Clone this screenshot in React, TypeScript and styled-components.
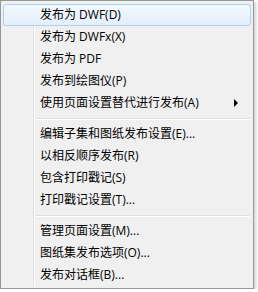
import React from 'react';
import styled, { createGlobalStyle } from 'styled-components';

const GlobalStyle = createGlobalStyle`
  html, body {
    margin: 0;
    padding: 0;
    background: #ffffff;
  }
`;

type Entry =
  | { kind: 'item'; label: string; active?: boolean; submenu?: boolean }
  | { kind: 'separator' };

const entries: Entry[] = [
  { kind: 'item', label: '发布为 DWF(D)', active: true },
  { kind: 'item', label: '发布为 DWFx(X)' },
  { kind: 'item', label: '发布为 PDF' },
  { kind: 'item', label: '发布到绘图仪(P)' },
  { kind: 'item', label: '使用页面设置替代进行发布(A)', submenu: true },
  { kind: 'separator' },
  { kind: 'item', label: '编辑子集和图纸发布设置(E)...' },
  { kind: 'item', label: '以相反顺序发布(R)' },
  { kind: 'item', label: '包含打印戳记(S)' },
  { kind: 'item', label: '打印戳记设置(T)...' },
  { kind: 'separator' },
  { kind: 'item', label: '管理页面设置(M)...' },
  { kind: 'item', label: '图纸集发布选项(O)...' },
  { kind: 'item', label: '发布对话框(B)...' },
];

const App: React.FC = () => (
  <>
    <GlobalStyle />
    <Menu>
      {entries.map((entry, i) =>
        entry.kind === 'separator' ? (
          <Separator key={i} />
        ) : (
          <Item key={i} $active={entry.active}>
            <Label>{entry.label}</Label>
            {entry.submenu && <Arrow />}
          </Item>
        ),
      )}
    </Menu>
  </>
);

const Menu = styled.div`
  width: 254px;
  box-sizing: border-box;
  padding: 3px 2px 2px;
  border: 1px solid #979797;
  background-color: #f0f0f0;
  background-image: linear-gradient(
    to right,
    transparent 30px,
    #e2e3e3 30px,
    #e2e3e3 31px,
    #ffffff 31px,
    #ffffff 32px,
    transparent 32px
  );
  background-origin: content-box;
  background-repeat: no-repeat;
  box-shadow: 2px 2px 3px rgba(0, 0, 0, 0.18);
  font-family: 'Segoe UI', 'Open Sans', 'Noto Sans CJK SC', sans-serif;
  font-size: 12px;
  color: #000000;
`;

const Item = styled.div<{ $active?: boolean }>`
  display: flex;
  align-items: center;
  height: 22px;
  box-sizing: border-box;
  padding-left: 36px;
  padding-right: 10px;
  border: 1px solid ${({ $active }) => ($active ? '#a8d2f7' : 'transparent')};
  border-radius: 3px;
  background: ${({ $active }) =>
    $active ? 'linear-gradient(to bottom, #f3f8fe, #e4eefa)' : 'transparent'};
  white-space: nowrap;
`;

const Label = styled.span`
  flex: 1;
  line-height: 16px;
`;

const Arrow = styled.span`
  width: 0;
  height: 0;
  margin-right: 2px;
  border-top: 4px solid transparent;
  border-bottom: 4px solid transparent;
  border-left: 4px solid #000000;
`;

const Separator = styled.div`
  height: 9px;
  margin-left: 32px;
  margin-right: 1px;
  background: linear-gradient(
    to bottom,
    transparent 4px,
    #e0e0e0 4px,
    #e0e0e0 5px,
    #ffffff 5px,
    #ffffff 6px,
    transparent 6px
  );
`;

export default App;
